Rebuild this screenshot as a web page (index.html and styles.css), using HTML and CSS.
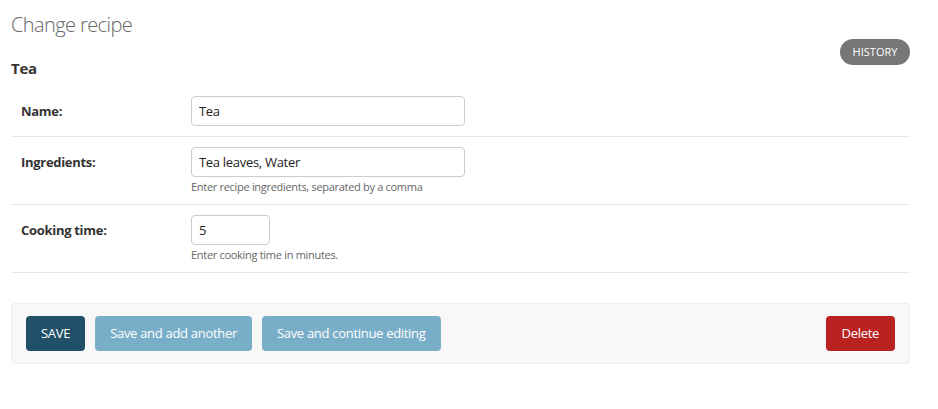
FILE: index.html
```html
<!DOCTYPE html>
<html lang="en">
<head>
<meta charset="utf-8">
<title>Change recipe</title>
<link rel="stylesheet" href="styles.css">
</head>
<body>
<div class="content">
  <h1 class="title">Change recipe</h1>
  <div class="object-tools">
    <a class="history" href="#">History</a>
  </div>
  <h2 class="subtitle">Tea</h2>
  <form class="change-form">
    <fieldset class="module">
      <div class="form-row">
        <label class="required" for="id_name">Name:</label>
        <div class="field">
          <input class="vTextField" id="id_name" type="text" value="Tea">
        </div>
      </div>
      <div class="form-row">
        <label class="required" for="id_ingredients">Ingredients:</label>
        <div class="field">
          <input class="vTextField" id="id_ingredients" type="text" value="Tea leaves, Water">
          <div class="help">Enter recipe ingredients, separated by a comma</div>
        </div>
      </div>
      <div class="form-row">
        <label class="required" for="id_cooking_time">Cooking time:</label>
        <div class="field">
          <input class="vIntegerField" id="id_cooking_time" type="text" value="5">
          <div class="help">Enter cooking time in minutes.</div>
        </div>
      </div>
    </fieldset>
    <div class="submit-row">
      <button type="button" class="btn btn-default">SAVE</button>
      <button type="button" class="btn">Save and add another</button>
      <button type="button" class="btn">Save and continue editing</button>
      <span class="spacer"></span>
      <a class="btn btn-delete" href="#">Delete</a>
    </div>
  </form>
</div>
</body>
</html>
```

FILE: styles.css
```css
* { box-sizing: border-box; }
html, body { margin: 0; padding: 0; background: #fff; }
body {
  font-family: "Open Sans", "Noto Sans", sans-serif;
  font-size: 13px;
  color: #333;
  letter-spacing: -0.3px;
}
.content {
  padding: 10px 28px 0 11px;
  display: flow-root;
}
.title {
  margin: 0;
  font-size: 20px;
  font-weight: 300;
  line-height: 30px;
  color: #666;
  letter-spacing: -0.6px;
}
.object-tools {
  float: right;
  margin-top: -1px;
}
.history {
  display: inline-block;
  width: 70px;
  height: 26px;
  line-height: 26px;
  text-align: center;
  border-radius: 13px;
  background: #767676;
  color: #fff;
  font-size: 11px;
  text-transform: uppercase;
  text-decoration: none;
  letter-spacing: 0;
}
.subtitle {
  margin: 18px 0 0;
  font-size: 15px;
  line-height: 20px;
  font-weight: 700;
  color: #333;
}
.change-form { clear: both; padding-top: 8px; }
.module {
  margin: 0;
  padding: 0;
  border: 0;
  min-width: 0;
}
.form-row {
  display: flex;
  padding: 10px 0 10px 10px;
  border-bottom: 1px solid #e8e8e8;
}
.form-row label {
  width: 170px;
  flex: none;
  font-weight: 700;
  line-height: 30px;
  color: #333;
}
.field { display: flex; flex-direction: column; align-items: flex-start; }
input[type=text] {
  font-family: inherit;
  font-size: 13px;
  letter-spacing: -0.3px;
  color: #222;
  height: 30px;
  padding: 5px 7px;
  border: 1px solid #ccc;
  border-radius: 4px;
  background: #fff;
  margin: 0;
}
.vTextField { width: 274px; }
.vIntegerField { width: 79px; }
.help {
  margin-top: 2px;
  font-size: 11px;
  line-height: 15px;
  color: #666;
}
.submit-row {
  display: flex;
  align-items: center;
  gap: 10px;
  margin-top: 30px;
  padding: 12px 14px;
  background: #f8f8f8;
  border: 1px solid #eee;
  border-radius: 4px;
}
.spacer { flex: 1; }
.btn {
  display: inline-block;
  height: 35px;
  line-height: 35px;
  padding: 0 15px;
  border: 0;
  border-radius: 4px;
  background: #79aec8;
  color: #fff;
  font-family: inherit;
  font-size: 13px;
  letter-spacing: -0.3px;
  text-decoration: none;
  cursor: pointer;
}
.btn-default { background: #205067; }
.btn-delete { background: #ba2121; padding: 0 16px; }
```
